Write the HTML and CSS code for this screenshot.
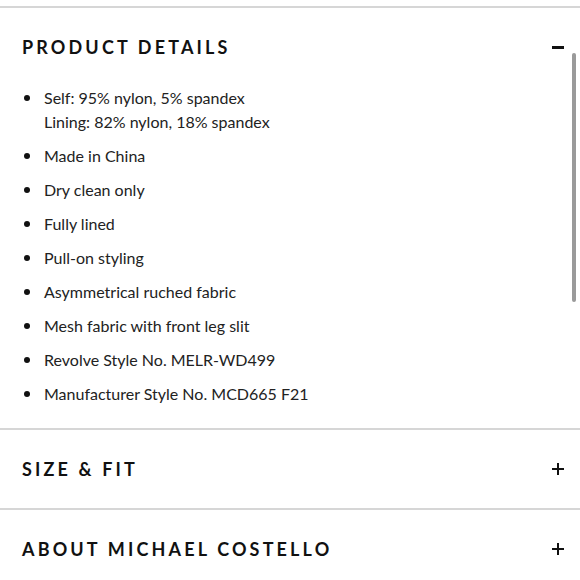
FILE: index.html
```html
<!DOCTYPE html>
<html lang="en">
<head>
<meta charset="utf-8">
<title>Product Details</title>
<link rel="stylesheet" href="styles.css">
</head>
<body>
<div class="accordion">
  <section class="panel open">
    <div class="panel-head">
      <h2 class="panel-title">PRODUCT DETAILS</h2>
      <span class="toggle minus"></span>
    </div>
    <ul class="details">
      <li>Self: 95% nylon, 5% spandex<br>Lining: 82% nylon, 18% spandex</li>
      <li>Made in China</li>
      <li>Dry clean only</li>
      <li>Fully lined</li>
      <li>Pull-on styling</li>
      <li>Asymmetrical ruched fabric</li>
      <li>Mesh fabric with front leg slit</li>
      <li>Revolve Style No. MELR-WD499</li>
      <li>Manufacturer Style No. MCD665 F21</li>
    </ul>
    <div class="scrollbar"></div>
  </section>
  <section class="panel">
    <div class="panel-head">
      <h2 class="panel-title">SIZE &amp; FIT</h2>
      <span class="toggle plus"></span>
    </div>
  </section>
  <section class="panel">
    <div class="panel-head">
      <h2 class="panel-title">ABOUT MICHAEL COSTELLO</h2>
      <span class="toggle plus"></span>
    </div>
  </section>
</div>
</body>
</html>
```

FILE: styles.css
```css
html, body {
  margin: 0;
  padding: 0;
  background: #fff;
}
body {
  font-family: "Lato", "Liberation Sans", sans-serif;
  color: #1a1a1a;
  padding-top: 6px;
}
.accordion {
  display: flex;
  flex-direction: column;
}
.panel {
  position: relative;
  border-top: 2px solid #d6d6d6;
}
.panel-head {
  height: 77px;
  padding-bottom: 1px;
  display: flex;
  align-items: center;
  justify-content: space-between;
  padding-left: 22px;
  padding-right: 16px;
}
.panel-title {
  margin: 0;
  font-size: 18px;
  font-weight: 700;
  letter-spacing: 3.15px;
  color: #111;
  line-height: 1;
}
.toggle {
  position: relative;
  width: 12px;
  height: 12px;
  display: block;
}
.toggle::before,
.toggle::after {
  content: "";
  position: absolute;
  background: #111;
}
.toggle::before {
  left: 0;
  right: 0;
  top: 5px;
  height: 2px;
}
.plus::after {
  top: 0;
  bottom: 0;
  left: 5px;
  width: 2px;
}
.minus::before {
  height: 3px;
}
.details {
  list-style: none;
  margin: 0;
  padding: 0 20px 22px 44px;
  display: flex;
  flex-direction: column;
  gap: 10px;
  font-size: 16px;
  line-height: 24px;
  color: #222;
}
.details li {
  position: relative;
}
.details li::before {
  content: "";
  position: absolute;
  left: -20px;
  top: 9px;
  width: 6px;
  height: 6px;
  border-radius: 50%;
  background: #111;
}
.scrollbar {
  position: absolute;
  right: 4px;
  top: 45px;
  width: 4px;
  height: 249px;
  border-radius: 2px;
  background: #9a9a9a;
}
```
